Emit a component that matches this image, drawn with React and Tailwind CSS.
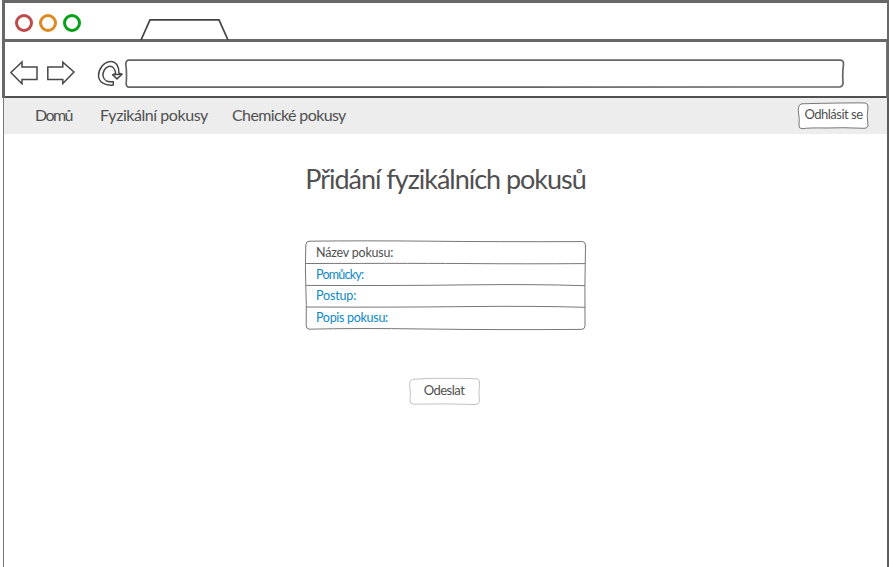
import React from "react";

const hand = "font-['Lato','Open_Sans',sans-serif] whitespace-nowrap text-[#505050]";

/* Hand-drawn outline placed behind the content of a box. */
function Sketch({ w, h, d, stroke, width = 1, fill = "#fff" }) {
  return (
    <svg className="absolute inset-0 overflow-visible" width={w} height={h} viewBox={`0 0 ${w} ${h}`} fill={fill}>
      <path d={d} stroke={stroke} strokeWidth={width} strokeLinejoin="round" />
    </svg>
  );
}

function TitleBar() {
  return (
    <div className="flex h-[42px] items-start border-t-[3px] border-b-[3px] border-[#686868] pl-[10px]">
      <div className="mt-[11px] flex gap-[6px]">
        <span className="size-[18px] rounded-full border-[3px] border-[#bd4b4b]" />
        <span className="size-[18px] rounded-full border-[3px] border-[#dd8a22]" />
        <span className="size-[18px] rounded-full border-[3px] border-[#04a015]" />
      </div>
      <svg className="mt-[15px] ml-[59px]" width="90" height="22" viewBox="0 0 90 22" fill="none">
        <path d="M1 22 L10 1.8 H79 L88 22" stroke="#444" strokeWidth="1.7" />
      </svg>
    </div>
  );
}

function Toolbar() {
  return (
    <div className="flex h-[56px] items-start border-r border-b-2 border-r-[#777] border-b-[#505050] pt-[17px] pl-[5px]">
      <svg width="29" height="26" viewBox="0 0 29 26" fill="none" stroke="#484848" strokeWidth="1.5">
        <path d="M.8 13.5 L12 3 V8 H27 V20.4 H12 V24.8 Z" />
      </svg>
      <svg className="ml-[8px]" width="29" height="26" viewBox="0 0 29 26" fill="none" stroke="#484848" strokeWidth="1.5">
        <path d="M.8 8 H15.8 V3.2 L27 13 L15.8 24.5 V20.4 H.8 Z" />
      </svg>
      <svg className="ml-[21px]" width="27" height="28" viewBox="0 0 27 28" fill="none" stroke="#484848" strokeWidth="1.5" strokeLinejoin="round">
        <path d="M16.3 22.7 V26 C8 27 1.8 23 1.5 17 C1.6 10 6.5 3 13.5 2.5 C19.5 2.4 22.2 8 22 14.3 L25 15.2 L20 19.9 L15.6 15.7 L18.6 14.8 C18.4 10.5 16.2 7.2 12.5 7.3 C8.3 7.8 5.4 12.8 6 17 C6.7 21.4 11 23.3 16.3 22.7 Z" />
        <path d="M15.6 15.7 L25 15.2" />
      </svg>
      <div className="relative ml-px h-[28px] w-[719px]">
        <Sketch
          w={719}
          h={28}
          stroke="#666"
          width={1.7}
          d="M4 1.2 L715 1.2 Q718.6 1.2 718.5 5 Q717.3 14 718 24 Q718 27.8 714 28 L4 28.2 Q1 28 1.2 24 Q2 14 .8 5 Q1 1.2 4 1.2 Z"
        />
      </div>
    </div>
  );
}

function NavBar() {
  return (
    <nav className="flex h-[36px] items-start bg-[#ededed] pl-[31px] text-[16px]">
      <a className={`${hand} mt-[5px] w-[65px] tracking-[-1.6px]`}>Domů</a>
      <a className={`${hand} mt-[5px] w-[132px] tracking-[-0.45px]`}>Fyzikální pokusy</a>
      <a className={`${hand} mt-[5px] tracking-[-0.62px]`}>Chemické pokusy</a>
      <button className="relative mt-[5px] mr-[18px] ml-auto flex h-[26px] w-[71px] items-start justify-center pt-[2px]">
        <Sketch
          w={71}
          h={26}
          stroke="#777"
          d="M4 .8 Q23 .2 43 0 T67 0 Q70 .2 70 4 Q68.5 13 70 23 Q69 25.6 66 25.3 Q45 24.3 28 25 Q12 24.6 4 25.7 Q.6 25.6 1 22 Q1.6 16 .7 11 Q-.5 4 2 1.6 Z"
        />
        <span className={`${hand} relative text-[13px] leading-[18px] tracking-[-0.5px]`}>Odhlásit se</span>
      </button>
    </nav>
  );
}

const rows = [
  { label: "Název pokusu:", blue: false, tracking: "tracking-[-0.2px]" },
  { label: "Pomůcky:", blue: true, tracking: "tracking-[-0.75px]" },
  { label: "Postup:", blue: true, tracking: "tracking-[-0.15px]" },
  { label: "Popis pokusu:", blue: true, tracking: "tracking-[-0.3px]" },
];

function ExperimentForm() {
  return (
    <div className="relative mt-[43px] h-[90px] w-[281px] pt-[2px]">
      <Sketch
        w={281}
        h={90}
        stroke="#777"
        d="M4 1.2 Q60 .5 125 1.2 T278 1.6 Q280.6 2 280.5 6 Q279.6 45 280 86 Q280 89.5 276 89.4 Q190 90 120 89 T4 89.2 Q1 89 1.2 85 Q1.6 64 .8 46 T.8 5 Q1 1.2 4 1.2 Z M1 23.5 Q120 23.2 170 23.6 T280 23.6 M1 45.4 Q90 45.8 160 44.9 T280 45.7 M1 67 Q90 67.4 160 66.6 T280 67.3"
      />
      {rows.map((row) => (
        <div key={row.label} className="relative h-[21.5px] pl-[11px] text-[12.5px] leading-[21px]">
          <span className={`${hand} ${row.tracking} ${row.blue ? "text-[#0c88cc]!" : ""}`}>{row.label}</span>
        </div>
      ))}
    </div>
  );
}

export default function App() {
  return (
    <div className="h-[567px] w-[889px] overflow-hidden bg-white">
      <div className="ml-[2px] h-[98px] border-r-[2px] border-l-[3px] border-[#686868]">
        <TitleBar />
        <Toolbar />
      </div>
      <div className="ml-[3px] h-[469px] border-r-2 border-l border-r-[#5c5c5c] border-l-[#777]">
        <NavBar />
        <main className="flex flex-col items-center">
          <h1 className={`${hand} mt-[26px] h-[37px] text-[27px] leading-[37px] tracking-[-1.03px]`}>
            Přidání fyzikálních pokusů
          </h1>
          <ExperimentForm />
          <button className="relative mt-[48px] mr-[3px] flex h-[27px] w-[71px] justify-center pt-[2px]">
            <Sketch
              w={71}
              h={27}
              stroke="#c2c2c2"
              d="M4 1.2 Q24 0 46 .3 T68 1 Q71 1.8 70.5 5 Q69.5 14 70.4 23 Q70 26.6 66 26.5 Q35 25.4 4 26.2 Q.8 26 1 22 Q2 15 .8 9 Q-.2 2 4 1.2 Z"
            />
            <span className={`${hand} relative text-[13px] leading-[20px] tracking-[-0.5px]`}>Odeslat</span>
          </button>
        </main>
      </div>
    </div>
  );
}
